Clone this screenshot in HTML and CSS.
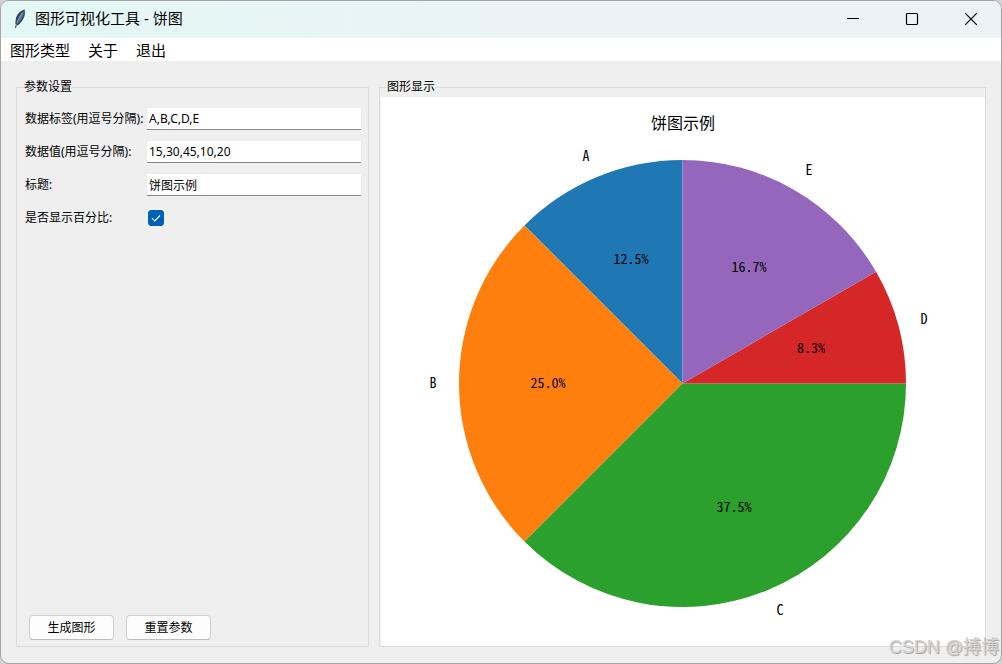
FILE: index.html
```html
<!DOCTYPE html>
<html lang="zh-CN">
<head>
<meta charset="utf-8">
<title>图形可视化工具 - 饼图</title>
<link rel="stylesheet" href="styles.css">
</head>
<body>
<div class="window">
  <header class="titlebar">
    <svg class="app-icon" width="16" height="20" viewBox="0 0 16 20" aria-hidden="true">
      <path d="M12.800 .6C8.500 1.500 4.500 5.500 3.800 10L3.300 14.500L5.500 16.500C9.500 14 12.300 9 12.900 5Z" fill="#34465a"/>
      <path d="M12 2C8.500 4.500 5.800 9 5 14.500C9 12 11.500 7 12 2Z" fill="#4b7bb5"/>
      <path d="M10.500 4C7.500 8 5 12 3.800 18.500" fill="none" stroke="#8fa6bb" stroke-width="0.800"/>
      <path d="M4.500 14L3.500 19" stroke="#45515c" stroke-width="1"/>
    </svg>
    <h1 class="title">图形可视化工具 - 饼图</h1>
    <div class="controls">
      <button class="control" type="button" aria-label="最小化"><svg width="14" height="14" viewBox="0 0 14 14"><path d="M1 6.500H13" stroke="#000" fill="none"/></svg></button>
      <button class="control" type="button" aria-label="最大化"><svg width="14" height="14" viewBox="0 0 14 14"><rect x="1.500" y="1.500" width="11" height="11" rx="1" stroke="#000" stroke-width="1.200" fill="none"/></svg></button>
      <button class="control" type="button" aria-label="关闭"><svg width="14" height="14" viewBox="0 0 14 14"><path d="M1.200 1.200L12.800 12.800M12.800 1.200L1.200 12.800" stroke="#000" stroke-width="1.200" fill="none"/></svg></button>
    </div>
  </header>
  <nav class="menubar">
    <button class="menu" type="button">图形类型</button>
    <button class="menu" type="button">关于</button>
    <button class="menu" type="button">退出</button>
  </nav>
  <main class="content">
    <fieldset class="panel settings">
      <legend class="legend">参数设置</legend>
      <form class="form">
        <div class="fields">
          <label class="label" for="labels">数据标签(用逗号分隔):</label>
          <input class="entry" id="labels" type="text" value="A,B,C,D,E">
          <label class="label" for="values">数据值(用逗号分隔):</label>
          <input class="entry" id="values" type="text" value="15,30,45,10,20">
          <label class="label" for="caption">标题:</label>
          <input class="entry" id="caption" type="text" value="饼图示例">
          <label class="label" for="percent">是否显示百分比:</label>
          <span class="check">
            <input class="checkbox" id="percent" type="checkbox" checked>
            <svg class="tick" width="16" height="16" viewBox="0 0 16 16" aria-hidden="true"><path d="M4 8.200L6.800 11L12 5.500" fill="none" stroke="#fff" stroke-width="1.100"/></svg>
          </span>
        </div>
        <div class="actions">
          <button class="button" type="button">生成图形</button>
          <button class="button" type="reset">重置参数</button>
        </div>
      </form>
    </fieldset>
    <fieldset class="panel display">
      <legend class="legend">图形显示</legend>
      <div class="figure">
        <svg class="chart" viewBox="0 0 604 549" role="img" aria-label="饼图示例">
          <g transform="translate(301.500 286.500)">
            <path fill="#1f77b4" d="M0 0V-223.500A223.500 223.500 0 0 0 -158.040 -158.040Z"/>
            <path fill="#ff7f0e" d="M0 0L-158.040 -158.040A223.500 223.500 0 0 0 -158.040 158.040Z"/>
            <path fill="#2ca02c" d="M0 0L-158.040 158.040A223.500 223.500 0 0 0 223.500 0Z"/>
            <path fill="#d62728" d="M0 0H223.500A223.500 223.500 0 0 0 193.560 -111.750Z"/>
            <path fill="#9467bd" d="M0 0L193.560 -111.750A223.500 223.500 0 0 0 0 -223.500Z"/>
          </g>
          <text class="chart-title" x="302" y="32">饼图示例</text>
          <g class="chart-text">
            <text x="205" y="64">A</text>
            <text x="52" y="291">B</text>
            <text x="399" y="518">C</text>
            <text x="543" y="227">D</text>
            <text x="428" y="78">E</text>
            <text x="250" y="167">12.5%</text>
            <text x="167" y="291">25.0%</text>
            <text x="353" y="415">37.5%</text>
            <text x="430" y="256">8.3%</text>
            <text x="368" y="175">16.7%</text>
          </g>
        </svg>
      </div>
    </fieldset>
  </main>
</div>
<div class="watermark">CSDN @搏博</div>
</body>
</html>
```
FILE: styles.css
```css
* { box-sizing: border-box; }

body {
  margin: 0;
  background: #d2d2d2;
  color: #000;
  font: 12px/18px "Noto Sans", "Noto Sans CJK SC", sans-serif;
}

button, input { font: inherit; color: inherit; }

.window {
  display: flex;
  flex-direction: column;
  height: 100vh;
  min-height: 420px;
  border: 1px solid #a4a4a4;
  border-radius: 9px;
  background: #efefef;
  overflow: hidden;
}

.titlebar {
  display: flex;
  flex: none;
  align-items: center;
  height: 37px;
  padding: 0 1px 2px 11px;
  background: linear-gradient(90deg, #e3f8f4, #ebf3f7 50%);
}

.app-icon { flex: none; }

.title {
  flex: 1;
  margin: 0 0 0 7px;
  padding-bottom: 2px;
  font-size: 15px;
  font-weight: 400;
  line-height: 22px;
}

.controls { display: flex; height: 100%; }

.control {
  display: grid;
  place-items: center;
  width: 59px;
  padding: 0;
  border: 0;
  background: none;
}

.menubar {
  display: flex;
  flex: none;
  gap: 18px;
  height: 23px;
  padding-left: 9px;
  background: #fff;
}

.menu {
  padding: 0;
  border: 0;
  background: none;
  font-size: 15px;
  line-height: 25px;
}

.content {
  display: grid;
  flex: 1;
  grid-template-columns: 353px minmax(0, 1fr);
  gap: 10px;
  min-height: 0;
  padding: 16px 15px 16px 15px;
}

.panel {
  min-width: 0;
  min-height: 0;
  height: 100%;
  margin: 0;
  border: 1px solid #dcdcdc;
}

.settings { padding: 10px 6px 6px 8px; }
.display { padding: 0 0 0 1px; }

.legend { padding: 0; line-height: 20px; }
.settings .legend { margin-left: -1px; }
.display .legend { margin-left: 6px; }

.form {
  display: flex;
  flex-direction: column;
  justify-content: space-between;
  height: 100%;
}

.fields {
  display: grid;
  grid-template-columns: 121px 1fr;
  grid-auto-rows: 23px;
  row-gap: 10px;
  align-items: center;
}

.label { white-space: nowrap; }

.entry {
  width: 100%;
  height: 23px;
  padding: 0 2px;
  border: 1px solid #ebebeb;
  border-bottom-color: #868686;
  border-radius: 2px;
  background: #fff;
  outline: 0;
}

.check { display: grid; width: 16px; height: 16px; margin-left: 2px; }

.checkbox, .tick { grid-area: 1 / 1; }

.checkbox {
  appearance: none;
  width: 16px;
  height: 16px;
  margin: 0;
  border: 1px solid #868686;
  border-radius: 3px;
  background: #fff;
}

.checkbox:checked { border-color: #005fb8; background: #005fb8; }

.tick { pointer-events: none; }

.actions { display: flex; gap: 12px; padding-left: 4px; }

.button {
  width: 85px;
  height: 25px;
  padding: 0;
  border: 1px solid #d0d0d0;
  border-bottom-color: #bcbcbc;
  border-radius: 4px;
  background: #fdfdfd;
}

.figure { height: 100%; background: #fff; }

.chart { display: block; width: 100%; height: 100%; }

.chart-title {
  font: 16px "Noto Sans CJK SC", sans-serif;
  text-anchor: middle;
}

.chart-text {
  font: 14px "Noto Sans CJK SC", sans-serif;
  font-feature-settings: "hwid";
  text-anchor: middle;
}

.watermark {
  position: absolute;
  right: 3px;
  bottom: 4px;
  color: #d4d4d4;
  font: 18px/26px "Liberation Sans", "Noto Sans CJK SC", sans-serif;
  text-shadow: 1px 1px 1px #a0a0a0;
}
```
